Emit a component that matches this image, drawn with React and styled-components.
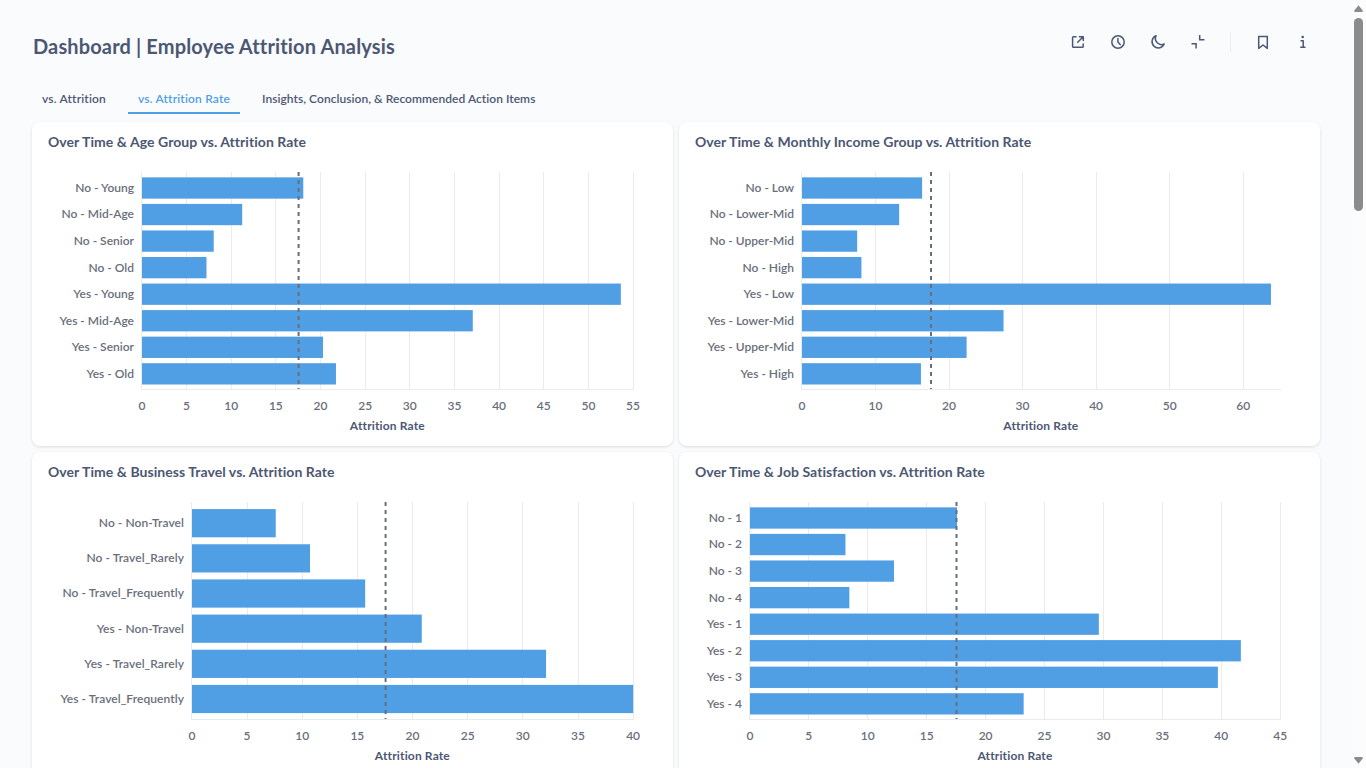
import React from "react";
import styled, { createGlobalStyle } from "styled-components";

const GlobalStyle = createGlobalStyle`
  * { box-sizing: border-box; }
  html, body { margin: 0; padding: 0; overflow: hidden; }
  body {
    font-family: Lato, "Liberation Sans", sans-serif;
    font-variant-ligatures: none;
    color: #4c5773;
    background: #f9fbfd;
  }
`;

const Page = styled.div`
  display: flex;
  width: 1366px;
  height: 768px;
  overflow: hidden;
  background: #fafbfd;
`;

const Main = styled.main`
  flex: 1;
  min-width: 0;
  padding: 0 31px 0 32px;
`;

const Header = styled.header`
  display: flex;
  justify-content: space-between;
  height: 84px;
  margin-right: -3px;
  padding: 22px 0 0 1px;
`;

const Title = styled.h1`
  margin: 12px 0 0;
  font-size: 20px;
  line-height: 24px;
  font-weight: 700;
  letter-spacing: 0.14px;
  white-space: nowrap;
`;

const Actions = styled.div`
  display: flex;
  align-items: center;
  height: 40px;
`;

const IconButton = styled.button`
  display: flex;
  align-items: center;
  justify-content: center;
  width: 40px;
  height: 40px;
  padding: 0;
  border: 0;
  background: none;
  color: #4c5773;
`;

const Divider = styled.span`
  width: 1px;
  height: 20px;
  margin: 0 12px;
  background: #eeecec;
`;

const Tabs = styled.nav`
  display: flex;
  gap: 12px;
  height: 38px;
`;

const Tab = styled.a`
  height: 30px;
  padding: 7px 10px 0;
  border-bottom: 2px solid ${(p) => (p.$active ? "#509ee3" : "transparent")};
  color: ${(p) => (p.$active ? "#509ee3" : "#4c5773")};
  font-size: 12px;
  line-height: 16px;
  font-weight: 600;
  letter-spacing: ${(p) => p.$tracking || "0.17px"};
  white-space: nowrap;
`;

const Grid = styled.div`
  display: grid;
  grid-template-columns: 641px 641px;
  grid-auto-rows: 324px;
  gap: 6px;
`;

const Card = styled.section`
  display: flex;
  flex-direction: column;
  border-radius: 8px;
  background: #fff;
  box-shadow: 0 1px 3px rgba(0, 0, 0, 0.13);
`;

const CardTitle = styled.h2`
  margin: 0;
  padding: 11px 16px 0;
  height: 40px;
  font-size: 14px;
  line-height: 18px;
  font-weight: 700;
  letter-spacing: 0.05px;
  white-space: nowrap;
`;

const Plot = styled.svg`
  display: block;
  font-family: Lato, "Liberation Sans", sans-serif;
  font-size: 12px;
`;

const Label = styled.text`
  fill: ${(p) => (p.$strong ? "#4c5773" : "#696e7b")};
  font-weight: ${(p) => (p.$strong ? 700 : 600)};
  letter-spacing: ${(p) => (p.$strong ? "0.15px" : p.$tracking || "0")};
  text-anchor: ${(p) => p.$anchor || "middle"};
`;

const Scrollbar = styled.aside`
  display: flex;
  flex-direction: column;
  align-items: center;
  width: 15px;
  height: 768px;
  padding: 5px 0 4px;
  background: #fcfcfc;
`;

const Thumb = styled.div`
  width: 9px;
  height: 193px;
  margin-top: 6px;
  margin-bottom: auto;
  border-radius: 5px;
  background: #8b8b8b;
`;

const TOP = 10;
const BOTTOM = 227;

function BarChart({ x0, unit, end, step, goal, first, pitch, thick, tracking, bars }) {
  const ticks = [];
  for (let v = 0; v <= end; v += step) ticks.push(v);
  const right = x0 + unit * end;
  return (
    <Plot width="641" height="284" viewBox="0 0 641 284">
      {ticks.map((v) => (
        <rect key={v} x={v ? Math.floor(x0 + v * unit) : x0 - 1} y={TOP} width="1" height={BOTTOM - TOP} fill="#eaebed" />
      ))}
      <rect x={x0 - 1} y={BOTTOM} width={Math.floor(right) - x0 + 2} height="1" fill="#eaebed" />
      {bars.map(([name, value], i) => (
        <rect key={name} x={x0} y={first + i * pitch - thick / 2} width={value * unit} height={thick} fill="#509ee3" />
      ))}
      <line x1={goal} x2={goal} y1={TOP} y2={BOTTOM} stroke="#696e7b" strokeWidth="2" strokeDasharray="4 4" />
      {bars.map(([name], i) => (
        <Label key={name} $anchor="end" $tracking={tracking} x={x0 - 8} y={Math.round(first + i * pitch - 0.15) + 4}>{name}</Label>
      ))}
      {ticks.map((v) => (
        <Label key={v} x={x0 + v * unit - 0.1} y="248">{v}</Label>
      ))}
      <Label $strong x={(x0 + right) / 2 - 0.2} y="268">Attrition Rate</Label>
    </Plot>
  );
}

const eight = { first: 26, pitch: 26.55, thick: 21.3 };
const six = { first: 31.2, pitch: 35.16, thick: 28.2, tracking: "0.07px" };

const CHARTS = [
  {
    title: "Over Time & Age Group vs. Attrition Rate",
    x0: 110, unit: 8.93, end: 55, step: 5, goal: 266.6, ...eight,
    bars: [["No - Young", 18.06], ["No - Mid-Age", 11.22], ["No - Senior", 8.03], ["No - Old", 7.22],
      ["Yes - Young", 53.62], ["Yes - Mid-Age", 37.04], ["Yes - Senior", 20.27], ["Yes - Old", 21.72]],
  },
  {
    title: "Over Time & Monthly Income Group vs. Attrition Rate",
    x0: 123, unit: 7.355, end: 65, step: 10, goal: 252, ...eight,
    bars: [["No - Low", 16.33], ["No - Lower-Mid", 13.21], ["No - Upper-Mid", 7.5], ["No - High", 8.08],
      ["Yes - Low", 63.76], ["Yes - Lower-Mid", 27.4], ["Yes - Upper-Mid", 22.38], ["Yes - High", 16.17]],
  },
  {
    title: "Over Time & Business Travel vs. Attrition Rate",
    x0: 160, unit: 11.03, end: 40, step: 5, goal: 353.6, ...six,
    bars: [["No - Non-Travel", 7.59], ["No - Travel_Rarely", 10.7], ["No - Travel_Frequently", 15.7],
      ["Yes - Non-Travel", 20.83], ["Yes - Travel_Rarely", 32.1], ["Yes - Travel_Frequently", 40]],
  },
  {
    title: "Over Time & Job Satisfaction vs. Attrition Rate",
    x0: 71, unit: 11.785, end: 45, step: 5, goal: 277.5, ...eight,
    bars: [["No - 1", 17.57], ["No - 2", 8.1], ["No - 3", 12.22], ["No - 4", 8.43],
      ["Yes - 1", 29.6], ["Yes - 2", 41.65], ["Yes - 3", 39.7], ["Yes - 4", 23.22]],
  },
];

function Icon({ children }) {
  return (
    <svg width="16" height="16" viewBox="0 0 16 16" fill="none" stroke="currentColor" strokeWidth="1.5" strokeLinecap="round" strokeLinejoin="round">
      {children}
    </svg>
  );
}

export default function App() {
  return (
    <>
      <GlobalStyle />
      <Page>
        <Main>
          <Header>
            <Title>Dashboard | Employee Attrition Analysis</Title>
            <Actions>
              <IconButton aria-label="Open">
                <Icon><path d="M6 2.7H3.4a.8.8 0 0 0-.8.8v9a.8.8 0 0 0 .8.8h9a.8.8 0 0 0 .8-.8V10M9.4 2.7h3.9v3.9M13 3 7.7 8.3" /></Icon>
              </IconButton>
              <IconButton aria-label="Auto-refresh">
                <Icon><circle cx="8" cy="8" r="6.2" /><path d="M7.9 4.5V8l2.3 2.6" /></Icon>
              </IconButton>
              <IconButton aria-label="Night mode">
                <Icon><path d="M6 1.8A6.3 6.3 0 1 0 14.2 10 6.2 6.2 0 0 1 6 1.8Z" /></Icon>
              </IconButton>
              <IconButton aria-label="Exit fullscreen">
                <Icon><path d="M9.7 1v4.7h4.8M1.5 9.7h4.6v4.7" strokeLinecap="butt" strokeLinejoin="miter" /></Icon>
              </IconButton>
              <Divider />
              <IconButton aria-label="Bookmark">
                <Icon><path d="M3.7 2.4h8.6v12L8 11l-4.3 3.4Z" /></Icon>
              </IconButton>
              <IconButton aria-label="Info">
                <Icon><circle cx="7.7" cy="3" r="1.3" fill="currentColor" stroke="none" /><path d="M5.5 6.7h2.7V13M5.2 13.2h5.3" strokeLinecap="butt" /></Icon>
              </IconButton>
            </Actions>
          </Header>
          <Tabs>
            <Tab>vs. Attrition</Tab>
            <Tab $active>vs. Attrition Rate</Tab>
            <Tab $tracking="0.045px">Insights, Conclusion, &amp; Recommended Action Items</Tab>
          </Tabs>
          <Grid>
            {CHARTS.map(({ title, ...chart }) => (
              <Card key={title}>
                <CardTitle>{title}</CardTitle>
                <BarChart {...chart} />
              </Card>
            ))}
          </Grid>
        </Main>
        <Scrollbar>
          <svg width="9" height="7" viewBox="0 0 9 7"><path d="M4.5.2 8.7 5.6Q9.1 7 8 7H1Q-.1 7 .3 5.6Z" fill="#8b8b8b" /></svg>
          <Thumb />
          <svg width="9" height="7" viewBox="0 0 9 7"><path d="M4.5 6.8 8.7 1.4Q9.1 0 8 0H1Q-.1 0 .3 1.4Z" fill="#8b8b8b" /></svg>
        </Scrollbar>
      </Page>
    </>
  );
}
